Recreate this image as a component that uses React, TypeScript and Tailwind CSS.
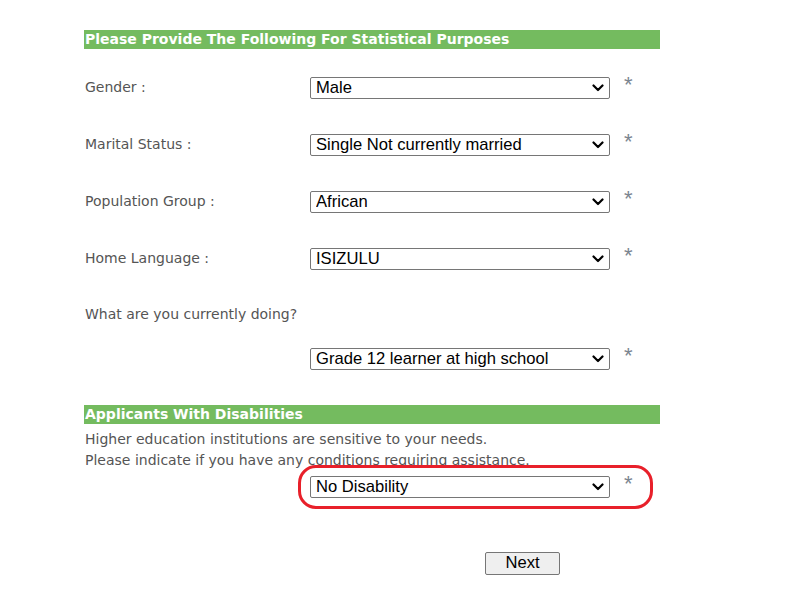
import React from "react";

const labelFont = { fontFamily: "Tahoma, 'DejaVu Sans', Verdana, sans-serif" };

function Chevron() {
  return (
    <svg width="12" height="8" viewBox="0 0 12 8" className="pointer-events-none absolute right-[6px] top-[8px]">
      <path d="M1.5 1.5 L6 6 L10.5 1.5" fill="none" stroke="#000" strokeWidth="2.2" strokeLinecap="round" strokeLinejoin="round" />
    </svg>
  );
}

function Sel({ value }: { value: string }) {
  return (
    <div className="relative h-[22px] w-[300px]">
      <select
        defaultValue={value}
        className="h-[22px] w-[300px] appearance-none rounded-[2px] border border-[#767676] bg-white pl-[5px] text-[16.6px] leading-[20px] text-black"
        style={{ fontFamily: "'Liberation Sans', Arial, sans-serif" }}
      >
        <option>{value}</option>
      </select>
      <Chevron />
    </div>
  );
}

function Star() {
  return (
    <span
      className="ml-[14px] -mt-[4px] text-[22px] leading-[20px] text-[#7b8590]"
      style={{ fontFamily: "'Liberation Sans', Arial, sans-serif" }}
    >
      *
    </span>
  );
}

function Row({ label, value }: { label: string; value: string }) {
  return (
    <div className="flex h-[22px] items-center">
      <div className="w-[226px] pl-[1px] text-[14px] text-[#555]">{label}</div>
      <Sel value={value} />
      <Star />
    </div>
  );
}

export default function App() {
  return (
    <div className="min-h-[607px] w-[805px] bg-white" style={labelFont}>
      <div className="ml-[84px] w-[576px] pt-[30px]">
        <div className="h-[19px] bg-[#74bb5f] pl-[1px] text-[14px] font-bold leading-[19px] text-white">
          Please Provide The Following For Statistical Purposes
        </div>
        <div className="mt-[27px] flex flex-col gap-[35px]">
          <Row label="Gender :" value="Male" />
          <Row label="Marital Status :" value="Single Not currently married" />
          <Row label="Population Group :" value="African" />
          <Row label="Home Language :" value="ISIZULU" />
        </div>
        <div className="mt-[36px] h-[19px] pl-[1px] text-[14px] leading-[19px] text-[#555]">
          What are you currently doing?
        </div>
        <div className="mt-[23px] flex h-[22px] items-center">
          <div className="w-[226px]" />
          <Sel value="Grade 12 learner at high school" />
          <Star />
        </div>
        <div className="mt-[36px] h-[19px] bg-[#74bb5f] pl-[1px] text-[14px] font-bold leading-[19px] text-white">
          Applicants With Disabilities
        </div>
        <div className="mt-[5px] pl-[1px] text-[14px] leading-[21px] text-[#555]">
          <div>Higher education institutions are sensitive to your needs.</div>
          <div>Please indicate if you have any conditions requiring assistance.</div>
        </div>
        <div className="relative mt-[4px] flex h-[22px] items-center">
          <div className="w-[226px]" />
          <Sel value="No Disability" />
          <Star />
          <div className="pointer-events-none absolute left-[214px] top-[-10px] h-[44px] w-[355px] rounded-[18px] border-[3px] border-[#e8202a]" />
        </div>
        <div className="mt-[54px] pl-[401px]">
          <button
            className="h-[23px] w-[75px] rounded-[2px] border border-[#767676] bg-[#efefef] text-[16.6px] leading-[20px] text-black"
            style={{ fontFamily: "'Liberation Sans', Arial, sans-serif" }}
          >
            Next
          </button>
        </div>
      </div>
    </div>
  );
}
